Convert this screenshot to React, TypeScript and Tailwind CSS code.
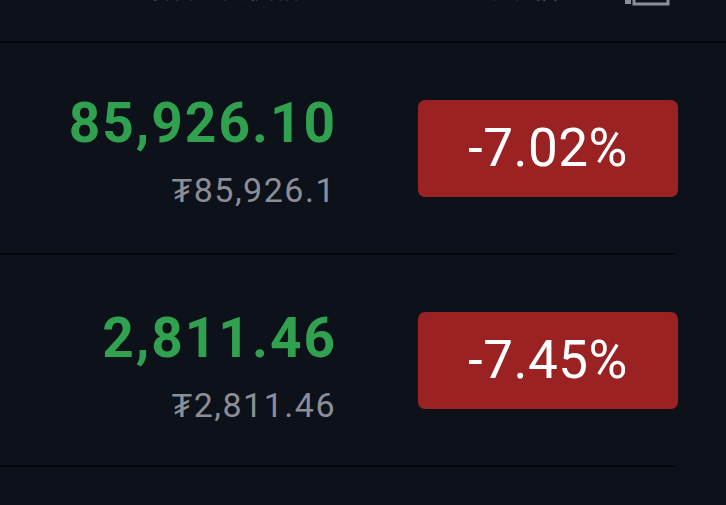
import React from "react";

const rows = [
  { price: "85,926.10", sub: "₮85,926.1", change: "-7.02%", pt: "pt-[53px]" },
  { price: "2,811.46", sub: "₮2,811.46", change: "-7.45%", pt: "pt-[56px]" },
];

export default function App() {
  return (
    <div
      className="w-[726px] h-[505px] overflow-hidden bg-[#0d111a]"
      style={{ fontFamily: "Roboto, 'Noto Sans CJK TC', sans-serif" }}
    >
      <div className="h-[41px] overflow-hidden flex items-start text-[26px] leading-[26px] text-[#8b8e96]">
        <div className="w-[300px] flex justify-end mt-[-24px]">最新成交價格</div>
        <div className="w-[258px] flex justify-end mt-[-24px]">漲跌幅</div>
        <div className="ml-[67px] mt-[-4px]">
          <svg width="46" height="10" viewBox="0 0 46 10">
            <rect x="0" y="0" width="6" height="8" fill="#8b8e96" />
            <rect x="9" y="0" width="34" height="8" fill="none" stroke="#8b8e96" strokeWidth="3" />
          </svg>
        </div>
      </div>
      <div className="h-[2px] w-full bg-[#05070c]" />
      {rows.map((r, i) => (
        <div key={i}>
          <div className="h-[210px] flex items-start">
            <div className={`w-[336px] flex flex-col items-end ${r.pt}`}>
              <div className="text-[55px] leading-[55px] font-bold text-[#30a14e] tracking-[2px] mr-[-1px]">
                {r.price}
              </div>
              <div className="mt-[22px] text-[34px] leading-[34px] text-[#8b8e96] tracking-[1.5px]">
                {r.sub}
              </div>
            </div>
            <div className="self-center ml-[82px] w-[260px] h-[97px] rounded-[7px] bg-[#9b2223] flex items-center justify-center text-white text-[53px] leading-none tracking-[0.5px]">
              {r.change}
            </div>
          </div>
          <div className="h-[2px] w-[676px] bg-[#05070c]" />
        </div>
      ))}
    </div>
  );
}
